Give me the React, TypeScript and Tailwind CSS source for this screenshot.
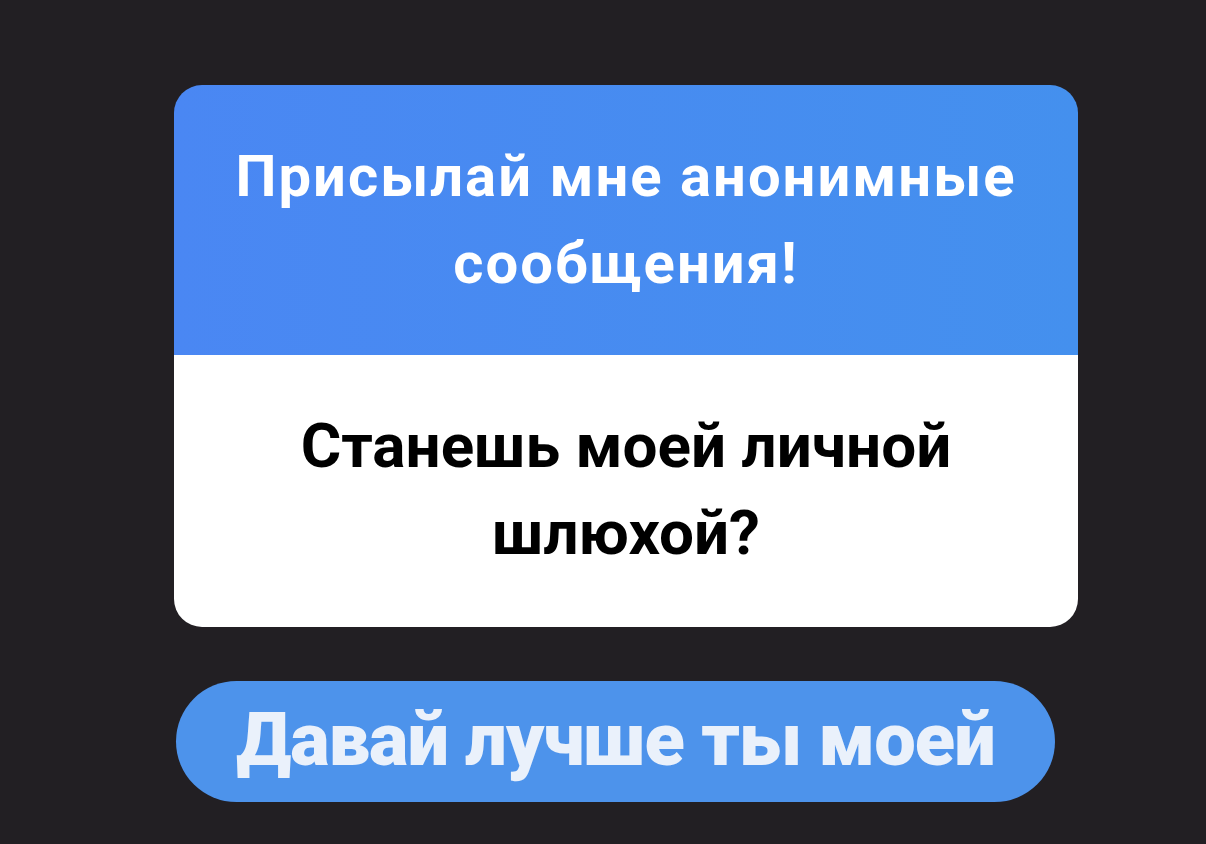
export default function App() {
  return (
    <div className="w-[1206px] h-[844px] bg-[#221f23] flex flex-col items-start pt-[85px] font-['Roboto',sans-serif]">
      {/* Question card */}
      <div className="w-[904px] ml-[174px] rounded-[28px] overflow-hidden">
        <div className="h-[270px] bg-gradient-to-r from-[#4a87f3] to-[#4490ee] flex items-center justify-center">
          <p className="text-white text-[58px] leading-[87px] font-bold text-center tracking-[2px]">
            Присылай мне анонимные
            <br />
            сообщения!
          </p>
        </div>
        <div className="h-[272px] bg-white flex items-center justify-center">
          <p className="text-black text-[62px] leading-[87px] font-bold text-center pb-[4px]">
            Станешь моей личной
            <br />
            шлюхой?
          </p>
        </div>
      </div>

      {/* Reply bubble */}
      <div className="mt-[54px] ml-[176px] w-[879px] h-[121px] rounded-full bg-[#4d93eb] flex items-center justify-center">
        <span className="text-[#eaf1fb] text-[74px] font-black leading-none tracking-[-1px] pb-[4px]">
          Давай лучше ты моей
        </span>
      </div>
    </div>
  );
}
